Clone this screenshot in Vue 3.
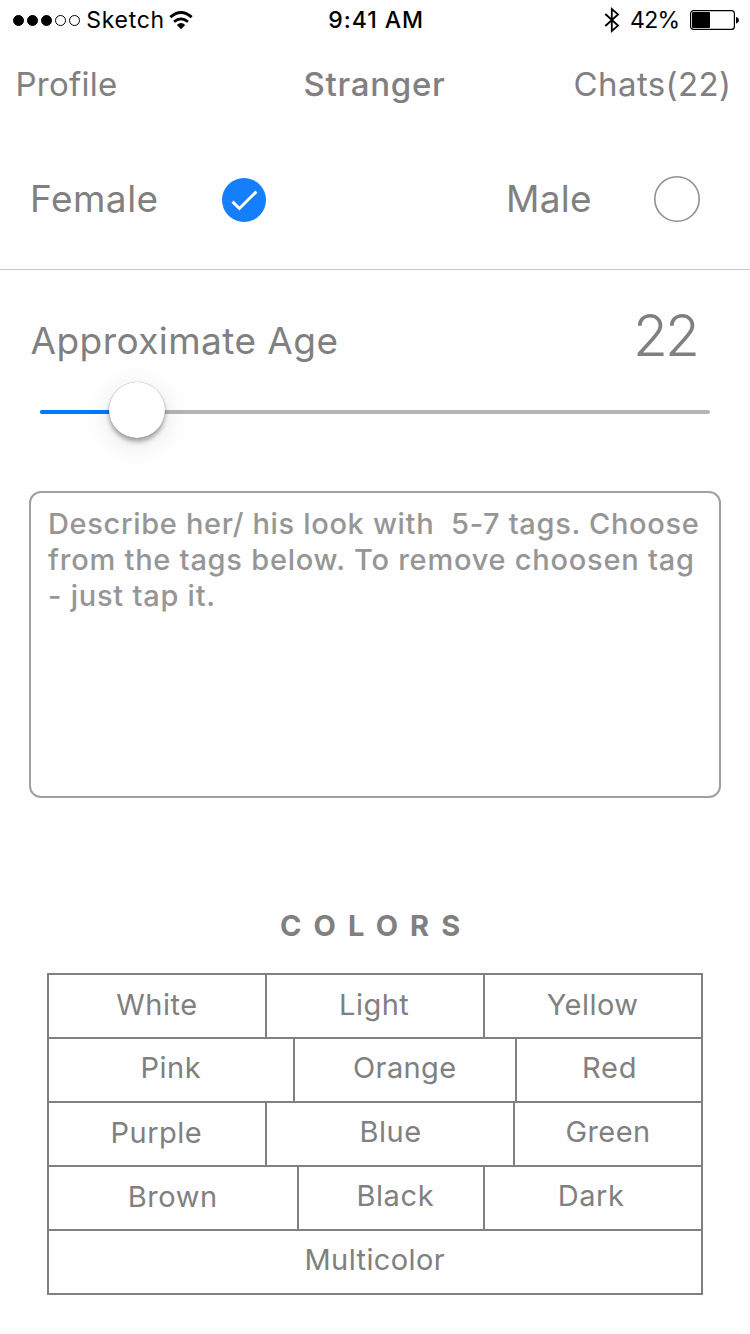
<script setup>
import { ref } from 'vue'

const gender = ref('female')
const age = ref(22)
const minAge = 12.5
const maxAge = 78

const signal = [true, true, true, false, false]

const rows = [
  [
    { name: 'White', width: 218, indent: 67.3, drop: 12, spacing: 0.5 },
    { name: 'Light', width: 218, indent: 72, drop: 12, spacing: 0.5 },
    { name: 'Yellow', width: 218, indent: 61.7, drop: 12, spacing: 0.45 },
  ],
  [
    { name: 'Pink', width: 246, indent: 91.5, drop: 11, spacing: 0.5 },
    { name: 'Orange', width: 222, indent: 58, drop: 11, spacing: 0.4 },
    { name: 'Red', width: 186, indent: 65, drop: 11, spacing: 0.8 },
  ],
  [
    { name: 'Purple', width: 218, indent: 61.5, drop: 12, spacing: 0.5 },
    { name: 'Blue', width: 248, indent: 92.5, drop: 11, spacing: 0.5 },
    { name: 'Green', width: 188, indent: 50.4, drop: 11, spacing: 0.45 },
  ],
  [
    { name: 'Brown', width: 250, indent: 78.7, drop: 12, spacing: 0.6 },
    { name: 'Black', width: 186, indent: 57.4, drop: 11, spacing: 0.6 },
    { name: 'Dark', width: 218, indent: 72.7, drop: 11, spacing: 0.6 },
  ],
  [{ name: 'Multicolor', width: 654, indent: 255.5, drop: 11, spacing: 0.4 }],
]

const cellStyle = (c) => ({
  width: c.width + 'px',
  paddingLeft: c.indent + 'px',
  paddingTop: c.drop + 'px',
  letterSpacing: c.spacing + 'px',
})
const filled = () => ((age.value - minAge) / (maxAge - minAge)) * 100 + '%'
</script>

<template>
  <div class="screen">
    <div class="status">
      <div class="carrier">
        <div class="dots">
          <i v-for="(on, i) in signal" :key="i" :class="{ on }"></i>
        </div>
        <span class="name">Sketch</span>
        <svg class="wifi" width="26" height="20" viewBox="0 0 26 20">
          <path d="M2.3 7.2 Q13 -2.4 23.7 7.2" fill="none" stroke="#000" stroke-width="2.9" />
          <path d="M6 11.8 Q13 5.8 20 11.8" fill="none" stroke="#000" stroke-width="2.6" />
          <path d="M8.8 14.9 Q13 11.2 17.2 14.9 L13 19.2 Z" fill="#000" />
        </svg>
      </div>
      <span class="clock">9:41 AM</span>
      <div class="power">
        <svg class="bt" width="16" height="26" viewBox="0 0 16 26">
          <path d="M1.3 7 L14 18.6 L7.8 24 V2 L14 7.4 L1.3 19" fill="none" stroke="#000" stroke-width="1.8" />
        </svg>
        <span class="percent">42%</span>
        <svg class="battery" width="50" height="20" viewBox="0 0 50 20">
          <rect x="0.6" y="0.6" width="43.8" height="18.8" rx="3" fill="none" stroke="#000" stroke-width="1.2" />
          <rect x="2" y="2" width="18" height="16" rx="1" />
          <path d="M46 7 Q48.8 7.6 48.8 10.2 Q48.8 12.8 46 13.4 Z" />
        </svg>
      </div>
    </div>

    <nav class="nav">
      <a class="profile">Profile</a>
      <h1>Stranger</h1>
      <a class="chats">Chats(22)</a>
    </nav>

    <section class="gender">
      <div class="option" @click="gender = 'female'">
        <span class="female">Female</span>
        <svg v-if="gender === 'female'" class="checked" width="44" height="44" viewBox="0 0 44 44">
          <circle cx="22" cy="22" r="22" fill="#157efb" />
          <path d="M10.5 23.6 L17.4 30.5 L34.4 13.6" fill="none" stroke="#fff" stroke-width="3" />
        </svg>
      </div>
      <div class="option" @click="gender = 'male'">
        <span class="male">Male</span>
        <svg width="46" height="46" viewBox="0 0 46 46">
          <circle cx="23" cy="23" r="22.2" fill="none" stroke="#8f8f8f" stroke-width="1.6" />
        </svg>
      </div>
    </section>

    <section class="age">
      <div class="age-row">
        <span class="label">Approximate Age</span>
        <span class="value">{{ age }}</span>
      </div>
      <div class="track">
        <div class="fill" :style="{ width: filled() }"></div>
        <div class="thumb" :style="{ left: filled() }"></div>
      </div>
    </section>

    <section class="tags">
      <p class="l1">Describe her/ his look with&nbsp; 5-7 tags. Choose</p>
      <p>from the tags below. To remove choosen tag</p>
      <p>- just tap it.</p>
    </section>

    <h2>COLORS</h2>
    <div class="table">
      <div v-for="(row, r) in rows" :key="r" class="row">
        <div v-for="c in row" :key="c.name" class="cell" :style="cellStyle(c)">{{ c.name }}</div>
      </div>
    </div>
  </div>
</template>

<style>
body {
  background: #fefefe;
}
</style>

<style scoped>
.screen {
  box-sizing: border-box;
  width: 750px;
  height: 1334px;
  overflow: hidden;
  background: #fefefe;
  color: #808080;
  font-family: Inter, Roboto, sans-serif;
}
.screen * {
  box-sizing: border-box;
}
.status {
  display: grid;
  grid-template-columns: 328.3px 275.7px auto;
  height: 40px;
  padding-top: 6px;
  color: #000;
  font-size: 23px;
  line-height: 28px;
}
.carrier,
.power {
  display: flex;
  align-items: flex-start;
}
.dots {
  display: flex;
  gap: 3px;
  margin: 9px 7.3px 0 13px;
}
.dots i {
  width: 11px;
  height: 11px;
  border: 1px solid #000;
  border-radius: 50%;
}
.dots i.on {
  background: #000;
}
.name {
  width: 79px;
  letter-spacing: 0.7px;
  margin-left: -1px;
}
.wifi {
  margin: 4px 0 0 3px;
}
.clock {
  font-weight: 500;
  letter-spacing: 0.96px;
}
.bt {
  margin-top: 1px;
}
.percent {
  width: 50px;
  margin-left: 10px;
  letter-spacing: -0.69px;
}
.battery {
  margin: 4px 0 0 10px;
}
.nav {
  display: grid;
  grid-template-columns: 288px 1fr auto;
  align-items: center;
  height: 88px;
  padding: 0 18.5px 0 15.5px;
  font-size: 33px;
  line-height: 40px;
}
.nav h1 {
  margin: 0;
  font-size: 33px;
  font-weight: 500;
  letter-spacing: 0.7px;
}
.profile {
  letter-spacing: 0.25px;
}
.chats {
  letter-spacing: 0.4px;
}
.gender {
  display: flex;
  justify-content: space-between;
  height: 142px;
  padding: 48px 50px 0 30px;
  border-bottom: 1px solid #c8c8c8;
  font-size: 37px;
  line-height: 45px;
}
.option {
  display: flex;
}
.female {
  width: 192px;
  letter-spacing: 0.5px;
}
.checked {
  margin-top: 2px;
}
.male {
  width: 148px;
  letter-spacing: 0.28px;
}
.age {
  height: 221px;
  padding: 31px 40px 0;
}
.age-row {
  display: flex;
  justify-content: space-between;
  height: 109px;
  margin: 0 13px 0 -9.5px;
}
.label {
  padding-top: 17px;
  font-size: 37px;
  line-height: 45px;
  letter-spacing: 0.44px;
}
.value {
  font-size: 57px;
  font-weight: 300;
  line-height: 69px;
  letter-spacing: -2.98px;
}
.track {
  position: relative;
  height: 4px;
  border-radius: 2px;
  background: #b4b4b4;
}
.fill {
  height: 4px;
  border-radius: 2px;
  background: #007aff;
}
.thumb {
  position: absolute;
  top: -28px;
  width: 56px;
  height: 56px;
  margin-left: -28px;
  border-radius: 50%;
  background: #fff;
  box-shadow:
    0 0 1px rgba(0, 0, 0, 0.45),
    0 4px 4px rgba(0, 0, 0, 0.3),
    0 6px 24px rgba(0, 0, 0, 0.11);
}
.tags {
  width: 692px;
  height: 307px;
  margin-left: 29px;
  padding: 13px 17px;
  border: 2px solid #a0a0a0;
  border-radius: 12px;
  color: #969696;
  font-size: 29px;
  font-weight: 500;
  line-height: 36px;
  letter-spacing: 0.76px;
}
.tags p {
  margin: 0;
  white-space: nowrap;
}
.tags .l1 {
  letter-spacing: 0.67px;
}
h2 {
  margin: 110px 0 30px 280px;
  font-size: 29px;
  font-weight: 700;
  line-height: 35px;
  letter-spacing: 12.1px;
}
.table {
  width: 656px;
  margin-left: 47px;
  border: 2px solid #808080;
  border-width: 2px 0 0 2px;
}
.row {
  display: flex;
}
.cell {
  height: 64px;
  border: 2px solid #808080;
  border-width: 0 2px 2px 0;
  font-size: 29px;
  line-height: 35px;
}
</style>
